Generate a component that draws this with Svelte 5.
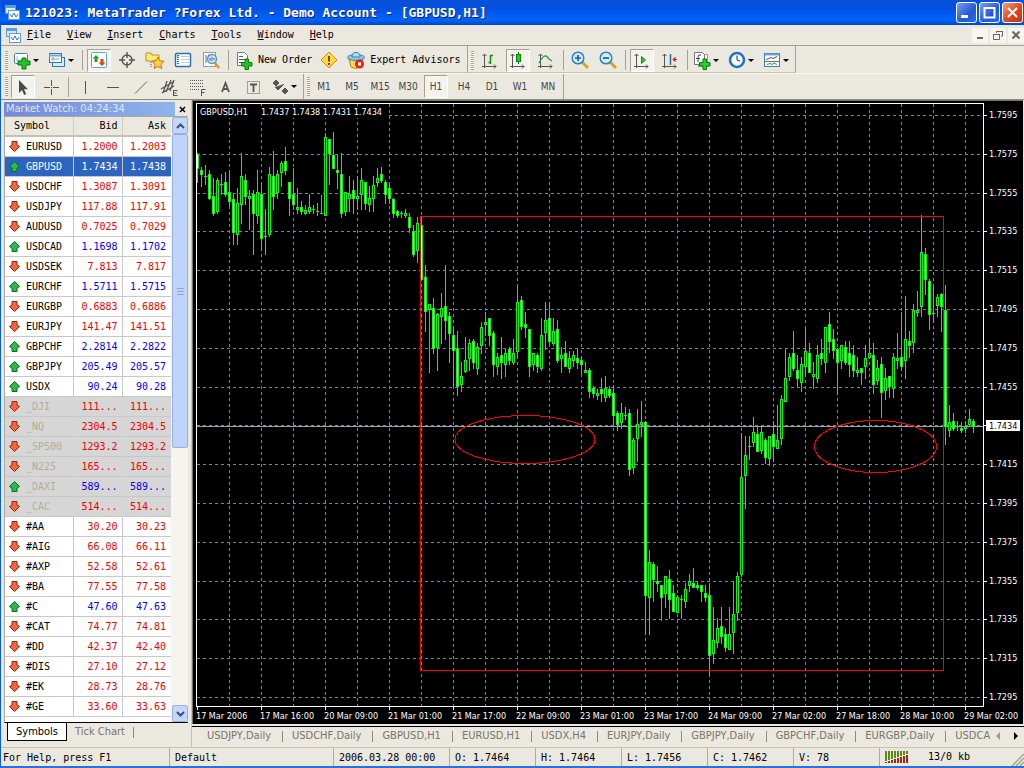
<script>
  const menus = ["File", "View", "Insert", "Charts", "Tools", "Window", "Help"];

  const icons = {
    newChart: `<rect x="2.5" y="3.5" width="13" height="10" rx="1" fill="#fff" stroke="#3f86b8"/><path d="M5 6v5M4 10h8" stroke="#9cc" fill="none"/><path d="M10 8h4v3h4v4h-4v4h-4v-4H6v-4h4z" fill="#22c322" stroke="#08780f"/>`,
    profiles: `<rect x="5.5" y="7.5" width="12" height="9" fill="#d8ecfa" stroke="#2f78b0"/><rect x="2.5" y="3.5" width="12" height="9" fill="#fff" stroke="#2f78b0"/><path d="M2 5.500h12" stroke="#69a9dc" stroke-width="2"/><path d="M6 7v4M4 9h8" stroke="#7ab"/>`,
    market: `<rect x="2.500" y="2.500" width="15" height="15" rx="1" fill="#fff" stroke="#58a2d8"/><path d="M7 5l3.500 3.500H8.500V12h-3V8.500h-2z" fill="#1da51d"/><path d="M13 16l-3.500-3.500h2V9h3v3.500h2z" fill="#e8421a"/>`,
    cross: `<circle cx="10" cy="10" r="5" fill="none" stroke="#555" stroke-width="1.400"/><path d="M10 2v6M10 12v6M2 10h6M12 10h6" stroke="#555" stroke-width="1.400"/>`,
    navigator: `<path d="M1 3h5l1 2h7v6H1z" fill="#ffe873" stroke="#b8932a"/><path d="M6 12v6" stroke="#555" stroke-dasharray="1 1"/><path d="M13 7l1.800 3.800 4.200.5-3 3 .8 4.200-3.800-2-3.800 2 .8-4.200-3-3 4.200-.5z" fill="#ffd23c" stroke="#c07a10"/>`,
    data: `<rect x="2.500" y="3.500" width="15" height="13" rx="1" fill="#fff" stroke="#2d6fb6" stroke-width="1.500"/><path d="M5 5v10" stroke="#2d6fb6" stroke-width="2" stroke-dasharray="1 1"/><path d="M8 6.500h8M8 9.500h8M8 12.500h8" stroke="#b8cde4"/><path d="M4 6h1" stroke="#d33"/>`,
    tester: `<rect x="2.500" y="2.500" width="12" height="14" fill="#fff" stroke="#999"/><path d="M5 5v8M8 4v4" stroke="#47a"/><circle cx="11" cy="9" r="4.500" fill="#cfe8fb" stroke="#5a97c8" stroke-width="1.500"/><path d="M9 8v3M11 7v4M13 8v2" stroke="#468"/><path d="M14 13l4 5" stroke="#d99a1c" stroke-width="2.500"/>`,
    order: `<path d="M3.500 2.500h7l3 3v10h-10z" fill="#fff" stroke="#777"/><path d="M5 6.500h4M5 9.500h6M5 12.500h4" stroke="#555"/><path d="M11 9h3.500v3.500H18V16h-3.500v3.500H11V16H7.500v-3.500H11z" fill="#22c322" stroke="#08780f"/>`,
    warn: `<path d="M10 2l8 8-8 8-8-8z" fill="#ffd84a" stroke="#c2901c"/><path d="M10 6v5.500M10 13v2" stroke="#7a4a00" stroke-width="2"/>`,
    expert: `<path d="M3 9l2 8q5 3 9 0l3-8z" fill="#ffd447" stroke="#b98a18"/><ellipse cx="10" cy="7.500" rx="8.500" ry="3" fill="#8cc8ea" stroke="#3d84b4"/><path d="M6 7q0-5 4-4.500Q14 2 14 7z" fill="#a8daf4" stroke="#3d84b4"/><circle cx="13.500" cy="14" r="4.500" fill="#e02818"/><rect x="12" y="12.500" width="3" height="3" fill="#fff"/>`,
    bars: `<path d="M4.500 4v14M2 16.500h14M2.500 6l2-2 2 2M14 14.500l2 2-2 2" fill="none" stroke="#555"/><path d="M10.500 5v9M8.500 12.500h2M10.500 5.500H13" stroke="#128a12" fill="none" stroke-width="1.500"/>`,
    candles: `<path d="M4.500 4v14M2 16.500h14M2.500 6l2-2 2 2M14 14.500l2 2-2 2" fill="none" stroke="#555"/><path d="M10.500 2v12" stroke="#0a6e0a"/><rect x="8.500" y="4.500" width="4" height="7" fill="#1ed01e" stroke="#0a7e0a"/>`,
    line: `<path d="M4.500 4v14M2 16.500h14M2.500 6l2-2 2 2M14 14.500l2 2-2 2" fill="none" stroke="#555"/><path d="M3 13q6-11 9-5 2 2 4 3" fill="none" stroke="#2a9a2a" stroke-width="1.300"/>`,
    zoomIn: `<path d="M12 12l6 6" stroke="#d9a12c" stroke-width="3"/><circle cx="8" cy="8" r="5.800" fill="#d4edff" stroke="#2f82c4" stroke-width="1.500"/><path d="M8 5v6M5 8h6" stroke="#1b5ea0" stroke-width="1.700"/>`,
    zoomOut: `<path d="M12 12l6 6" stroke="#d9a12c" stroke-width="3"/><circle cx="8" cy="8" r="5.800" fill="#d4edff" stroke="#2f82c4" stroke-width="1.500"/><path d="M5 8h6" stroke="#1b5ea0" stroke-width="1.700"/>`,
    scroll: `<path d="M4.500 4v14M2 16.500h14M2.500 6l2-2 2 2M14 14.500l2 2-2 2" fill="none" stroke="#555"/><path d="M9.500 6.500l4 3.500-4 3.500z" fill="#3c3" stroke="#128a12"/>`,
    shift: `<path d="M4.500 4v14M2 16.500h14M2.500 6l2-2 2 2M14 14.500l2 2-2 2" fill="none" stroke="#555"/><path d="M10.500 4v11" stroke="#2469a8" stroke-width="1.500"/><path d="M17 9.500h-3M15 7.500l-2 2 2 2z" fill="#c22" stroke="#c22"/>`,
    indicators: `<rect x="6.500" y="4.500" width="9" height="12" fill="#fff" stroke="#999"/><path d="M2.500 2.500h8l2 2v10h-10z" fill="#fff" stroke="#777"/><path d="M9 5q-3-1-3 2v5M4 8.500h4" fill="none" stroke="#444"/><path d="M11 9h3.500v3.500H18V16h-3.500v3.500H11V16H7.500v-3.500H11z" fill="#26d026" stroke="#08780f"/>`,
    clock: `<circle cx="10" cy="10" r="7" fill="#f4faff" stroke="#2272c2" stroke-width="2.500"/><path d="M10 5.500V10l3 1" stroke="#234" fill="none"/>`,
    template: `<rect x="2.500" y="3.500" width="15" height="13" fill="#fff" stroke="#3a80bc"/><path d="M3 4.500h14" stroke="#63a8e0" stroke-width="2"/><path d="M3 11.500h14" stroke="#3a80bc"/><path d="M4 9.500l3-1 2-1 2 1 4-2" stroke="#a03018" fill="none"/><path d="M5 14.500l3-1 2 1 2-1.500 3 1.500" stroke="#2a9a2a" fill="none"/>`,
    cursor: `<path d="M6 3v13l3-3 2.200 5 2-1-2.200-4.800H15z" fill="#4a4a4a"/>`,
    plus: `<path d="M10.500 3v6M10.500 12v6M3 10.500h6M12 10.500h6M10 10.500h1" stroke="#555"/>`,
    vline: `<path d="M10.500 4v13" stroke="#555"/>`,
    hline: `<path d="M4 10.500h12" stroke="#555"/>`,
    trend: `<path d="M4 16.500L16 4.500" stroke="#666"/>`,
    channel: `<path d="M2 12L14 5M3 16l12-7M8 4L4 16M12 3L7 15M15 3l-4 11" stroke="#555" fill="none" stroke-width="1.300"/><path d="M14.500 13.500h4M14.500 16h3M14.500 18.500h4M14.500 13v6" stroke="#555"/>`,
    fibo: `<path d="M3 3.500h14M3 6.500h14M3 9.500h14M3 12.500h9" stroke="#555" stroke-dasharray="1 1"/><path d="M14.500 19v-6.500h4M14.500 15.500h3" fill="none" stroke="#555"/>`,
    textA: `<path d="M7 15l3.500-9 3.500 9M8 12h5" fill="none" stroke="#555" stroke-width="1.800"/>`,
    label: `<rect x="4.500" y="4.500" width="12" height="12" fill="none" stroke="#555" stroke-dasharray="1 1"/><path d="M7 7.500h7M10.500 7v8" stroke="#555" stroke-width="1.800"/>`,
    arrows: `<path d="M3 6l3-3 3 3-3 3zM12 14l3-3 3 3-3 3zM5 10l3 3 6-6" fill="#555" stroke="#555"/>`
  };

  const standard = [
    { icon: "newChart", label: "New Chart", drop: true },
    { icon: "profiles", label: "Profiles", drop: true },
    null,
    { icon: "market", label: "Market Watch", on: true },
    { icon: "cross", label: "Crosshair" },
    { icon: "navigator", label: "Navigator" },
    { icon: "data", label: "Data Window" },
    { icon: "tester", label: "Strategy Tester" },
    null,
    { icon: "order", text: "New Order" },
    { icon: "warn", label: "MetaEditor" },
    { icon: "expert", text: "Expert Advisors" }
  ];
  const charts = [
    { icon: "bars", label: "Bar Chart" },
    { icon: "candles", label: "Candlesticks", on: true },
    { icon: "line", label: "Line Chart" },
    null,
    { icon: "zoomIn", label: "Zoom In" },
    { icon: "zoomOut", label: "Zoom Out" },
    null,
    { icon: "scroll", label: "Auto Scroll", on: true },
    { icon: "shift", label: "Chart Shift" },
    null,
    { icon: "indicators", label: "Indicators", drop: true },
    { icon: "clock", label: "Periods", drop: true },
    { icon: "template", label: "Templates", drop: true }
  ];
  const lines = [
    { icon: "cursor", label: "Cursor", on: true },
    { icon: "plus", label: "Crosshair" },
    null,
    { icon: "vline", label: "Vertical Line" },
    { icon: "hline", label: "Horizontal Line" },
    { icon: "trend", label: "Trendline" },
    { icon: "channel", label: "Equidistant Channel" },
    { icon: "fibo", label: "Fibonacci" },
    { icon: "textA", label: "Text" },
    { icon: "label", label: "Text Label" },
    { icon: "arrows", label: "Arrows", drop: true }
  ];
  const periods = ["M1", "M5", "M15", "M30", "H1", "H4", "D1", "W1", "MN"].map((tf) => ({
    tf,
    on: tf === "H1"
  }));

  // symbol, bid, ask, up
  const quotes = [
    ["EURUSD", "1.2000", "1.2003", 0],
    ["GBPUSD", "1.7434", "1.7438", 1],
    ["USDCHF", "1.3087", "1.3091", 0],
    ["USDJPY", "117.88", "117.91", 0],
    ["AUDUSD", "0.7025", "0.7029", 0],
    ["USDCAD", "1.1698", "1.1702", 1],
    ["USDSEK", "7.813", "7.817", 0],
    ["EURCHF", "1.5711", "1.5715", 1],
    ["EURGBP", "0.6883", "0.6886", 0],
    ["EURJPY", "141.47", "141.51", 0],
    ["GBPCHF", "2.2814", "2.2822", 1],
    ["GBPJPY", "205.49", "205.57", 1],
    ["USDX", "90.24", "90.28", 1],
    ["_DJI", "111...", "111...", 0],
    ["_NQ", "2304.5", "2304.5", 0],
    ["_SP500", "1293.2", "1293.2", 0],
    ["_N225", "165...", "165...", 0],
    ["_DAXI", "589...", "589...", 1],
    ["_CAC", "514...", "514...", 0],
    ["#AA", "30.20", "30.23", 0],
    ["#AIG", "66.08", "66.11", 0],
    ["#AXP", "52.58", "52.61", 0],
    ["#BA", "77.55", "77.58", 0],
    ["#C", "47.60", "47.63", 1],
    ["#CAT", "74.77", "74.81", 0],
    ["#DD", "42.37", "42.40", 0],
    ["#DIS", "27.10", "27.12", 0],
    ["#EK", "28.73", "28.76", 0],
    ["#GE", "33.60", "33.63", 0]
  ];
  let selected = "GBPUSD";

  // high, body top, body bottom, low, 1 = bear; one candle every 4px
  const bars = [
    [153,154,169,183,1],[167,170,175,187,1],[165,176,176,185,0],[170,174,199,200,1],[178,196,214,216,1],
    [178,180,212,214,0],[174,184,184,195,0],[172,182,195,197,1],[170,192,202,206,1],[194,199,233,245,1],
    [188,203,235,245,0],[153,176,205,224,0],[174,180,197,205,1],[190,196,199,230,0],[190,194,214,255,1],
    [170,192,216,224,0],[183,194,239,251,1],[209,236,236,255,0],[167,174,235,237,0],[151,176,197,210,1],
    [170,174,193,199,0],[161,163,173,187,0],[147,161,171,175,1],[182,182,199,216,1],[168,194,205,210,1],
    [188,207,210,214,0],[201,207,212,215,1],[205,210,214,215,0],[194,207,212,214,0],[205,209,209,214,0],
    [203,211,211,216,0],[195,213,213,214,0],[133,137,216,216,0],[139,139,154,185,1],[132,155,169,169,1],
    [155,170,173,189,1],[153,174,214,218,1],[192,192,212,216,0],[176,194,199,212,0],[180,190,199,214,1],
    [176,196,199,210,0],[168,180,195,210,0],[182,182,204,210,1],[186,198,205,212,0],[176,185,199,212,0],
    [168,178,183,187,0],[167,174,181,183,1],[180,182,195,204,1],[184,188,199,204,1],[198,199,214,218,1],
    [210,211,216,218,1],[211,213,213,218,0],[209,213,216,218,0],[213,217,228,233,1],[225,231,255,257,1],
    [217,223,251,263,0],[216,225,280,280,1],[265,277,312,332,1],[304,304,310,373,0],[298,308,349,354,1],
    [313,314,348,371,0],[293,308,317,344,0],[265,306,321,340,1],[312,316,334,363,1],[327,335,351,386,1],
    [331,348,387,396,1],[362,376,385,392,0],[337,360,372,373,0],[339,343,359,371,0],[339,341,363,369,1],
    [343,347,369,375,0],[322,327,346,354,0],[312,322,325,336,0],[318,318,336,346,1],[331,333,365,377,1],
    [353,357,367,375,0],[337,355,363,379,1],[349,353,365,377,0],[347,349,361,365,1],[339,353,363,365,0],
    [287,302,352,358,0],[296,300,327,330,1],[312,324,328,338,1],[329,329,367,377,1],[353,353,365,371,0],
    [353,355,367,373,1],[318,335,369,371,0],[302,320,333,350,0],[302,318,342,345,1],[318,331,344,346,0],
    [320,329,361,363,1],[347,355,359,373,0],[341,353,367,367,1],[351,358,369,373,0],[351,355,361,367,0],
    [349,358,363,369,1],[356,360,365,374,1],[362,370,373,373,0],[368,370,392,398,1],[386,388,394,398,1],
    [389,393,396,400,0],[378,389,394,402,1],[376,388,398,402,0],[386,389,396,398,1],[385,393,416,427,1],
    [411,413,425,431,1],[403,413,423,429,0],[407,415,415,420,0],[409,413,470,476,1],[438,440,468,474,0],
    [409,424,439,462,0],[401,422,425,437,0],[421,422,596,635,1],[550,562,598,635,0],[562,564,580,602,1],
    [566,581,584,592,1],[585,585,598,621,1],[576,576,594,608,0],[570,579,600,619,1],[585,593,612,612,1],
    [595,597,613,613,0],[595,599,599,619,0],[583,589,602,608,0],[574,581,586,592,0],[568,583,588,588,1],
    [581,585,588,590,1],[585,585,592,602,1],[585,593,598,602,1],[583,595,656,676,1],[607,640,654,664,0],
    [618,628,643,648,0],[607,626,637,644,1],[628,634,648,652,1],[607,634,650,650,0],[581,614,633,654,0],
    [572,576,613,621,0],[433,477,575,577,0],[436,455,476,509,0],[436,446,446,460,0],[417,432,443,447,0],
    [426,434,452,452,1],[427,432,451,454,0],[438,440,458,464,1],[436,436,459,466,0],[421,434,447,462,1],
    [405,440,449,449,0],[395,399,439,445,0],[349,378,402,402,0],[353,357,377,381,0],[331,353,369,371,1],
    [355,370,379,387,1],[357,364,383,392,0],[329,351,367,377,0],[343,353,373,373,1],[362,374,377,389,0],
    [345,355,379,383,0],[339,353,359,365,1],[327,327,363,373,0],[312,324,342,353,1],[329,339,351,359,1],
    [348,349,363,394,1],[345,345,361,369,0],[341,347,363,365,1],[341,353,365,377,1],[345,355,371,377,1],
    [357,370,373,377,0],[368,368,373,385,1],[345,358,367,379,0],[339,353,358,359,0],[343,355,385,394,1],
    [360,368,381,385,0],[357,364,393,418,1],[368,378,391,400,0],[376,376,387,398,1],[353,357,389,398,0],
    [333,358,361,369,0],[312,357,367,371,1],[296,339,361,379,0],[331,341,346,358,1],[304,310,343,353,0],
    [291,310,313,317,0],[215,252,307,317,0],[248,254,280,295,1],[279,281,315,330,1],[287,313,313,323,0],
    [294,297,306,317,0],[293,294,307,332,1],[285,310,427,445,1],[405,422,431,437,0],[413,421,429,431,1],
    [421,426,426,431,0],[422,428,431,433,1],[421,426,429,433,0],[409,419,425,427,0],[419,421,427,433,1]
  ];

  const prices = [];
  for (let i = 0; i < 16; i++) {
    prices.push({ y: Math.round(11 + i * 38.8), text: (1.7595 - i * 0.002).toFixed(4) });
  }
  const times = [
    "17 Mar 2006", "17 Mar 16:00", "20 Mar 09:00", "21 Mar 01:00", "21 Mar 17:00",
    "22 Mar 09:00", "23 Mar 01:00", "23 Mar 17:00", "24 Mar 09:00", "27 Mar 02:00",
    "27 Mar 18:00", "28 Mar 10:00", "29 Mar 02:00"
  ];

  const tabs = [
    "USDJPY,Daily", "USDCHF,Daily", "GBPUSD,H1", "EURUSD,H1", "USDX,H4",
    "EURJPY,Daily", "GBPJPY,Daily", "GBPCHF,Daily", "EURGBP,Daily", "USDCA"
  ];
</script>

{#snippet appIcon()}
  <svg class="app-icon" width="15" height="15" viewBox="0 0 15 15">
    <rect x="0.5" y="0.5" width="10" height="8" fill="#d6ebfb" stroke="#5c9fd6" />
    <path d="M1 2h9" stroke="#5c9fd6" stroke-width="2" />
    <rect x="3.500" y="5.500" width="11" height="9" fill="#fff" stroke="#5c9fd6" />
    <path d="M5 9l2 3 2-4 2 4 2-3" fill="none" stroke="#3676b8" />
  </svg>
{/snippet}

{#snippet toolbar(items)}
  <span class="grip"></span>
  {#each items as item}
    {#if !item}
      <span class="sep"></span>
    {:else if item.tf}
      <button class="tool" class:on={item.on}>{item.tf}</button>
    {:else}
      <button
        class="tool"
        class:on={item.on}
        class:drop={item.drop}
        class:wide={item.text}
        aria-label={item.label}>
        <svg width="20" height="20" viewBox="0 0 20 20">{@html icons[item.icon]}</svg>
        {#if item.text}{item.text}{/if}
        {#if item.drop}<span class="caret"></span>{/if}
      </button>
    {/if}
  {/each}
{/snippet}

<div class="window">
  <header class="title">
    {@render appIcon()}
    <h1>121023: MetaTrader ?Forex Ltd. - Demo Account - [GBPUSD,H1]</h1>
    <button class="cap" aria-label="Minimize">
      <svg width="19" height="19"><path d="M4 13.500h7" stroke="#fff" stroke-width="3" /></svg>
    </button>
    <button class="cap" aria-label="Maximize">
      <svg width="19" height="19"><path d="M4 5h11M4.500 4v10.500h10V4" fill="none" stroke="#fff" stroke-width="2" /></svg>
    </button>
    <button class="cap close" aria-label="Close">
      <svg width="19" height="19"><path d="M5 5l9 9M14 5l-9 9" stroke="#fff" stroke-width="2" /></svg>
    </button>
  </header>

  <nav class="menu">
    {@render appIcon()}
    {#each menus as m}
      <button class="item"><u>{m[0]}</u>{m.slice(1)}</button>
    {/each}
    <span class="fill"></span>
    <button class="mdi" aria-label="Minimize chart">
      <svg width="12" height="12"><path d="M3 9h6" stroke="#666" stroke-width="2" /></svg>
    </button>
    <button class="mdi" aria-label="Restore chart">
      <svg width="12" height="12"><path d="M4 2.500h7M10.500 2v5H9M4.500 2v2M1 5.500h7M1.500 5v5.500h6V5" fill="none" stroke="#666" /></svg>
    </button>
    <button class="mdi" aria-label="Close chart">
      <svg width="12" height="12"><path d="M2.500 2.500l7 7M9.500 2.500l-7 7" stroke="#666" stroke-width="2" /></svg>
    </button>
  </nav>

  <div class="bar first">
    <div class="group">{@render toolbar(standard)}</div>
    <div class="group">{@render toolbar(charts)}</div>
  </div>
  <div class="bar second">
    <div class="group">{@render toolbar(lines)}</div>
    <div class="group">{@render toolbar(periods)}</div>
  </div>

  <main>
    <aside>
      <div class="watch-title">
        <h2>Market Watch: 04:24:34</h2>
        <button aria-label="Close Market Watch">
          <svg width="7" height="7"><path d="M1 1l5 5M6 1l-5 5" stroke="#000" stroke-width="1.500" /></svg>
        </button>
      </div>
      <div class="list">
        <div class="rows">
          <table>
            <thead>
              <tr><th class="sym">Symbol</th><th>Bid</th><th>Ask</th></tr>
            </thead>
            <tbody>
              {#each quotes as [symbol, bid, ask, up]}
                <tr class:up class:index={symbol[0] === "_"} class:selected={symbol === selected}>
                  <td class="sym">
                    <svg width="11" height="11" viewBox="0 0 11 11">
                      {#if up}
                        <path d="M5.500 0.500L10.500 5.500 8 7v3.500H3V7L0.500 5.500z" fill="#2cb84a" stroke="#0a6a20" />
                      {:else}
                        <path d="M5.500 10.500L0.500 5.500 3 4V0.500h5V4l2.500 1.500z" fill="#f0683a" stroke="#982410" />
                      {/if}
                    </svg>
                    {symbol}
                  </td>
                  <td>{bid}</td>
                  <td>{ask}</td>
                </tr>
              {/each}
            </tbody>
          </table>
        </div>
        <div class="scroll">
          <button aria-label="Scroll up">
            <svg width="9" height="6"><path d="M1 5l3.500-3.500L8 5" fill="none" stroke="#3a4e78" stroke-width="2" /></svg>
          </button>
          <div class="track"><div class="thumb"><i></i><i></i><i></i></div></div>
          <button aria-label="Scroll down">
            <svg width="9" height="6"><path d="M1 1l3.500 3.500L8 1" fill="none" stroke="#3a4e78" stroke-width="2" /></svg>
          </button>
        </div>
      </div>
      <div class="watch-tabs">
        <button class="active">Symbols</button>
        <button>Tick Chart</button>
        <span class="end"></span>
      </div>
    </aside>

    <section>
      <div class="chart">
        <svg class="plot" shape-rendering="crispEdges">
          {#each prices as p}
            <line x1="0" x2="100%" y1={p.y + 0.5} y2={p.y + 0.5} class="grid" />
          {/each}
          {#each Array(24) as _, i}
            <line x1={i * 32 + 32.5} x2={i * 32 + 32.5} y1="0" y2="100%" class="grid" />
          {/each}
          <rect x="0" y="322" width="100%" height="1" fill="#9aa4b0" />
          <g transform="translate(-197 -104)">
            {#each bars as [high, top, bottom, low, bear], i}
              {@const x = 197 + i * 4}
              <rect {x} y={high} width="1" height={low - high} fill="#0f0" />
              <rect x={x - 1} y={top} width="3" height={Math.max(bottom - top, 1)} fill="#0f0" />
              {#if bottom - top > 2}
                <rect {x} y={top + 1} width="1" height={bottom - top - 2} fill={bear ? "#fff" : "#000"} />
              {/if}
            {/each}
            <rect x="420.500" y="216.500" width="523" height="454" class="mark" />
            <ellipse cx="525" cy="439.500" rx="70" ry="24" class="mark" />
            <ellipse cx="875.500" cy="446.500" rx="61" ry="26" class="mark" />
          </g>
          <rect x="0" y="2" width="189" height="12" fill="#000" />
          <text x="3" y="11">GBPUSD,H1</text>
          <text x="64" y="11">1.7437 1.7438 1.7431 1.7434</text>
        </svg>
        <svg class="prices" shape-rendering="crispEdges">
          {#each prices as p, i}
            <rect x="0" y={p.y} width="3" height="1" fill="#fff" />
            {#if i !== 8}
              <text x="5" y={p.y + 3}>{p.text}</text>
            {/if}
          {/each}
          <rect x="2" y="316" width="34" height="11" fill="#fff" />
          <text x="5" y="325" class="now">1.7434</text>
        </svg>
        <svg class="times" shape-rendering="crispEdges">
          {#each times as t, i}
            <rect x={i * 64 + 3} y="0" width="1" height="3" fill="#fff" />
            <text x={i * 64 + 2} y="12">{t}</text>
          {/each}
        </svg>
      </div>
      <div class="chart-tabs">
        <div class="strip">
          {#each tabs as t}
            <button>{t}</button>
          {/each}
        </div>
        <button class="nav" aria-label="Previous tabs">
          <svg width="5" height="8"><path d="M4 0v8L0 4z" fill="#999" /></svg>
        </button>
        <button class="nav" aria-label="Next tabs">
          <svg width="5" height="8"><path d="M1 0v8l4-4z" fill="#000" /></svg>
        </button>
      </div>
    </section>
  </main>

  <footer>
    <span class="help">For Help, press F1</span>
    <span class="profile">Default</span>
    <span class="date">2006.03.28 00:00</span>
    <span class="val">O: 1.7464</span>
    <span class="val">H: 1.7464</span>
    <span class="val">L: 1.7456</span>
    <span class="val">C: 1.7462</span>
    <span class="val">V: 78</span>
    <span class="traffic">
      <svg width="24" height="12" shape-rendering="crispEdges">
        {#each Array(8) as _, i}
          <rect x={i * 3} y="0" width="2" height={10 - i} fill="#5a8c1c" />
          <rect x={i * 3} y={11 - i} width="2" height={i + 1} fill="#a02810" />
        {/each}
      </svg>
      13/0 kb
    </span>
    <svg class="size" width="12" height="12">
      <path d="M0 12L12 0M4 12l8-8M8 12l4-4" stroke="#a8a594" stroke-width="1.500" />
    </svg>
  </footer>
</div>

<style>
  :global(body) {
    margin: 0;
    overflow: hidden;
  }
  .window {
    --face: #ebe8df;
    --mono: "DejaVu Sans Mono", "Liberation Mono", monospace;
    --ui: "DejaVu Sans Condensed", "Noto Sans", sans-serif;
    display: flex;
    flex-direction: column;
    box-sizing: border-box;
    height: 100vh;
    border-left: 1px solid #0a5ce0;
    border-bottom: 2px solid #2e6fd2;
    background: var(--face);
    font: 10px/14px var(--mono);
    color: #000;
  }
  button {
    padding: 0;
    border: none;
    background: none;
    font: inherit;
    color: inherit;
  }
  svg {
    display: block;
    flex: none;
  }
  h1,
  h2 {
    margin: 0;
    white-space: nowrap;
  }

  /* caption and menu */
  .title {
    display: flex;
    align-items: center;
    gap: 2px;
    height: 25px;
    padding: 0 1px 0 4px;
    box-sizing: border-box;
    background: linear-gradient(#0a50d8, #0050e0 30%, #0064fa 80%, #0048c8);
  }
  .title h1 {
    flex: 1;
    padding-left: 3px;
    overflow: hidden;
    font: bold 13px/20px var(--mono);
    color: #fff;
    text-shadow: 1px 1px #0a1e78;
  }
  .cap {
    width: 21px;
    height: 21px;
    border: 1px solid #fff;
    border-radius: 3px;
    background: linear-gradient(135deg, #7a9ef0, #2456d8 60%, #2c6af0);
  }
  .cap.close {
    background: linear-gradient(135deg, #f09a80, #dc4418 60%, #c83410);
  }
  .menu {
    display: flex;
    align-items: center;
    height: 20px;
    padding-left: 5px;
    border-bottom: 1px solid #a5a295;
  }
  .menu .app-icon {
    margin-right: 6px;
  }
  .item {
    margin-right: 16px;
  }
  .fill {
    flex: 1;
  }
  .mdi {
    width: 16px;
    height: 15px;
    padding-left: 2px;
    margin-left: 2px;
    background: #f6f5f0;
  }

  /* toolbars */
  .bar {
    display: flex;
    height: 27px;
    border-bottom: 1px solid #f8f7f0;
  }
  .bar.second {
    height: 25px;
    border-bottom: 1px solid #8e8b7e;
  }
  .group {
    display: flex;
    align-items: center;
    padding-right: 3px;
    border-right: 1px solid #a5a295;
    border-bottom: 1px solid #c6c3a8;
  }
  .first .group {
    padding-top: 2px;
  }
  .group + .group {
    padding-right: 0;
  }
  .second .group {
    padding-right: 1px;
    border-bottom: none;
  }
  .grip {
    width: 3px;
    height: 19px;
    margin-left: 4px;
    margin-right: 1px;
    background: repeating-linear-gradient(#a9a690 0 1px, #f8f7f0 1px 2px);
  }
  .group + .group .grip {
    margin-left: 3px;
    margin-right: 2px;
  }
  .second .group + .group .grip {
    margin-right: 0;
  }
  .sep {
    width: 1px;
    height: 20px;
    margin: 0 2px 0 3px;
    background: #a5a295;
  }
  .tool {
    display: flex;
    align-items: center;
    justify-content: center;
    width: 24px;
    height: 23px;
    margin: 0 2px;
    box-sizing: border-box;
    font: 10px/14px var(--ui);
    color: #444;
  }
  .tool.on {
    border: 1px solid;
    border-color: #a5a295 #fff #fff #a5a295;
    background: #f4f2ec;
  }
  .tool.drop {
    width: 35px;
    margin: 0;
    padding-right: 2px;
  }
  .tool.wide {
    width: auto;
    margin: 0;
    padding: 0 3px;
    gap: 4px;
    font: 10px/14px var(--mono);
    color: #000;
  }
  .caret {
    margin: 0 1px;
    border: 3px solid transparent;
    border-top-color: #000;
    border-bottom: none;
  }

  /* market watch */
  main {
    display: flex;
    flex: 1;
    min-height: 0;
  }
  aside {
    display: flex;
    flex-direction: column;
    width: 191px;
    padding: 2px 3px 6px 3px;
    box-sizing: border-box;
    border-right: 1px solid #c6c3b0;
  }
  .watch-title {
    display: flex;
    height: 14px;
  }
  .watch-title h2 {
    flex: 1;
    padding-left: 2px;
    overflow: hidden;
    background: linear-gradient(90deg, #7488da, #8fb4ec);
    font: 11px/14px var(--ui);
    color: #dfe6f6;
  }
  .watch-title button {
    width: 13px;
    padding-left: 4px;
  }
  .list {
    display: flex;
    flex: 1;
    min-height: 0;
    border: 1px solid #aca899;
    border-right: none;
    border-bottom-color: #000;
  }
  .rows {
    flex: 1;
    overflow: hidden;
    background: #fff;
  }
  table {
    width: 100%;
    table-layout: fixed;
    border-collapse: separate;
    border-spacing: 0;
  }
  th,
  td {
    height: 19px;
    padding: 0 4px 0 0;
    border-right: 1px solid #c8c8c8;
    border-bottom: 1px solid #c8c8c8;
    text-align: right;
    font-weight: normal;
    color: #f00000;
  }
  th {
    height: 18px;
    background: var(--face);
    border-bottom: 2px solid #c4c1b0;
    border-right-color: #d0cdbd;
    color: #000;
  }
  th:last-child,
  td:last-child {
    border-right: none;
    padding-right: 5px;
  }
  .sym {
    width: 64px;
    padding-left: 4px;
    padding-right: 0;
    text-align: left;
    color: #000;
  }
  th.sym {
    width: 59px;
    padding-left: 9px;
  }
  td.sym svg {
    display: inline-block;
    vertical-align: -2px;
  }
  td.sym {
    white-space: nowrap;
    overflow: hidden;
  }
  .up td {
    color: #0000f0;
  }
  .up td.sym {
    color: #000;
  }
  .index td {
    background: #d6d6d6;
    border-right-color: #d6d6d6;
  }
  .index td.sym {
    color: #b0ae96;
  }
  .selected td,
  .selected td.sym {
    background: #2c64c0;
    color: #fff;
  }
  .scroll {
    display: flex;
    flex-direction: column;
    width: 16px;
    padding-left: 1px;
    background: #f6f4ee;
  }
  .scroll button {
    display: flex;
    align-items: center;
    justify-content: center;
    height: 17px;
    border: 1px solid #98b0e0;
    border-radius: 2px;
    background: #c4d6fa;
  }
  .track {
    flex: 1;
  }
  .thumb {
    display: flex;
    flex-direction: column;
    align-items: center;
    justify-content: center;
    gap: 2px;
    height: 55%;
    box-sizing: border-box;
    border: 1px solid #98b0e0;
    border-radius: 2px;
    background: #bfd4fa;
  }
  .thumb i {
    width: 7px;
    height: 1px;
    background: #8aa4dc;
  }
  .watch-tabs {
    display: flex;
    height: 18px;
    padding-left: 3px;
    font: 11px/18px var(--ui);
    color: #77756a;
  }
  .watch-tabs button {
    padding: 0 8px;
  }
  .watch-tabs .active {
    border: 1px solid #000;
    border-top: none;
    background: #fff;
    color: #000;
  }
  .watch-tabs .end {
    width: 1px;
    height: 11px;
    margin-top: 4px;
    background: #8e8b70;
  }

  /* chart window */
  section {
    display: flex;
    flex-direction: column;
    flex: 1;
    min-width: 0;
  }
  .chart {
    display: grid;
    grid-template-columns: 1fr 39px;
    grid-template-rows: 1fr 17px;
    flex: 1;
    min-height: 0;
    padding: 2px 0 0 3px;
    margin-right: 1px;
    border-top: 1px solid #77746a;
    border-left: 1px solid #77746a;
    background: #000;
  }
  .plot {
    width: 100%;
    height: 100%;
    box-sizing: border-box;
    border: 1px solid #fff;
  }
  .prices {
    width: 100%;
    height: 100%;
    padding-top: 1px;
    box-sizing: border-box;
  }
  .times {
    grid-column: 1 / 3;
    width: calc(100% + 2px);
    height: 17px;
    margin-left: -2px;
  }
  .chart text {
    font: 9px var(--ui);
    fill: #fff;
  }
  .chart .now {
    fill: #000;
  }
  .grid {
    stroke: #788696;
    stroke-dasharray: 3 3;
  }
  .mark {
    fill: none;
    stroke: #f00;
  }
  .chart-tabs {
    display: flex;
    height: 20px;
    margin-top: 2px;
    border-top: 1px solid #000;
    font: 11px/17px var(--ui);
    color: #77756a;
  }
  .strip {
    display: flex;
    flex: 1;
    min-width: 0;
    overflow: hidden;
    padding-left: 5px;
  }
  .strip button {
    flex: none;
    height: 17px;
    padding: 0 11px 0 10px;
  }
  .strip button:last-child {
    padding-right: 0;
  }
  .strip button + button {
    background: linear-gradient(#8e8b70, #8e8b70) 0 4px / 1px 11px no-repeat;
  }
  .nav {
    width: 17px;
    height: 17px;
    padding-left: 6px;
  }

  footer {
    display: flex;
    height: 18px;
    border-top: 1px solid #c6c3b0;
    line-height: 20px;
    white-space: nowrap;
  }
  footer span {
    box-sizing: border-box;
    padding-left: 5px;
    border-right: 1px solid #b0ad9e;
  }
  .help {
    width: 169px;
    padding-left: 2px;
  }
  .profile {
    width: 164px;
  }
  .date {
    width: 116px;
  }
  .val {
    width: 86px;
  }
  footer .traffic {
    display: flex;
    flex: 1;
    align-items: center;
    gap: 19px;
    border-right: none;
  }
  .size {
    align-self: flex-end;
  }
</style>
